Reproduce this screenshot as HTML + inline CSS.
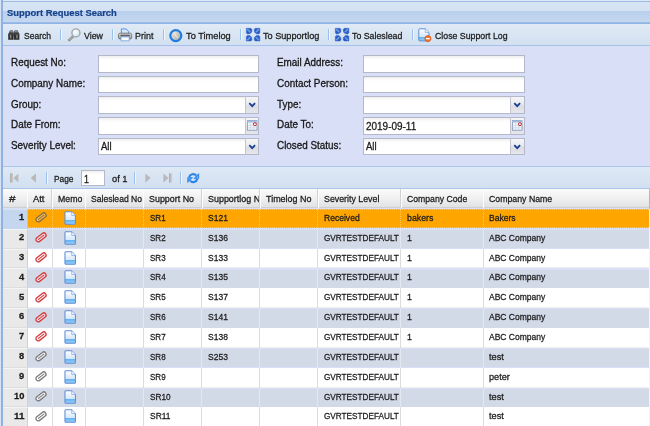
<!DOCTYPE html><html><head><meta charset="utf-8"><title>Support Request Search</title><style>
*{box-sizing:border-box;margin:0;padding:0}
html,body{width:650px;height:426px;overflow:hidden;background:#d9dff6}
body{position:relative;font-family:"Liberation Sans",sans-serif;color:#222}
.abs{position:absolute}
#root{left:0;top:0;width:650px;height:426px;will-change:transform}
.t{white-space:nowrap;line-height:12px;transform-origin:0 50%;color:#1c1c1c;-webkit-text-stroke:0.28px #1c1c1c}
.title{-webkit-text-stroke:0.2px #15428b}
svg{position:absolute;overflow:visible}
#hdr{left:0;top:0;width:650px;height:23.9px;background:linear-gradient(#dfe9f6 0,#dfe9f6 0.9px,#9bbbe7 1.1px,#9bbbe7 2.0px,#d7e4f4 2.3px,#d3e1f3 11.3px,#adc8eb 11.6px,#b9cfed 12.4px,#bcd1ed 13px,#c6d8f0 22.2px,#8fb3e3 22.6px,#8fb3e3 23.9px)}
.title{color:#15428b}
#tb{left:0;top:23.9px;width:650px;height:22.6px;background:linear-gradient(#e1eaf6 0,#d9e5f3 50%,#d2e0f1 21.2px,#a5c3e9 21.5px,#a5c3e9 100%)}
.sep{top:29px;width:2px;height:11.4px;background:linear-gradient(90deg,#9cc0ec 0,#9cc0ec 55%,#f3f7fc 55%)}
#lb{left:0;top:0;width:2.8px;height:426px;background:linear-gradient(90deg,#dce6f5 0,#d3e0f3 1.1px,#8db2e3 1.3px,#8db2e3 100%)}
#form{left:2.6px;top:46.6px;width:648px;height:119.6px;background:#d9dff6}
.lb{-webkit-text-stroke:0.3px #111}
.lbl{font-size:9.85px;color:#111;-webkit-text-stroke:0.25px #111;white-space:nowrap;line-height:12px;left:11px}
.lbl2{left:276.6px}
.inp{height:17.6px;background:linear-gradient(#eeeeee 0,#fdfdfd 3px,#fff 5px,#fff 100%);border:1px solid #b5b8c8;border-radius:0}
.trg{width:14.4px;height:17.6px;border:1px solid #b5b8c8;border-left:1px solid #c3c5cf;background:linear-gradient(#f6f6f7 0,#e9eaee 45%,#dcdde3 55%,#e6e7ec 100%)}
.val{font-size:10px;color:#111;-webkit-text-stroke:0.25px #111;white-space:nowrap;line-height:12px}
#pg{left:2.6px;top:166.0px;width:648px;height:23.4px;background:linear-gradient(#a9c5ea 0,#a9c5ea 1.1px,#dfe9f5 1.4px,#d8e4f3 50%,#d2e0f1 22.0px,#a9c5ea 22.3px,#a9c5ea 100%)}
#gh{left:2.6px;top:189.3px;width:646.6px;height:19.2px;background:linear-gradient(#fbfbfb 0,#f0f0f1 50%,#e1e2e4 100%);border-bottom:1px solid #cfcfcf}
.ghc{top:189.2px;height:19px;overflow:hidden}
.ghs{top:189.2px;width:1.6px;height:19px;background:linear-gradient(90deg,#d2d2d2 0,#d2d2d2 50%,#fdfdfd 50%)}
.row{left:2.6px;width:646.6px;background:#fff;border-bottom:1px solid #efefef}
.row.alt{background:#d2d9e7;border:none}
.row.sel{background:#ffa500;border-top:1px dotted rgba(255,240,210,.45);border-bottom:1px dotted rgba(255,240,210,.45)}
.num{left:2.6px;width:25.1px;background:#e9e9e9;border-right:1px solid #d2d2d2;border-top:1px solid #f4f4f4;border-bottom:1px solid #dedede}
.num.sel{background:#c5d7ef;border-right:1px solid #b4c6e0;border-top-color:#d5e2f4;border-bottom-color:#c5d7ef}
.vl{width:1px;background:#dcdcdc}
.vl.va{background:#e3e7f0}
.vl.vs{background:none;border-left:1px dotted rgba(255,240,205,.45)}
</style></head><body>
<div id="root" class="abs">
<div id="hdr" class="abs"></div>
<div class="abs t title" style="left:7px;top:6.6px;font-size:9.7px;font-weight:bold;transform:scaleX(0.9713);">Support Request Search</div>
<div id="tb" class="abs"></div>
<div class="abs t" style="left:24.4px;top:29.6px;font-size:9.5px;transform:scaleX(0.8978);">Search</div>
<div class="abs t" style="left:84px;top:29.6px;font-size:9.5px;transform:scaleX(0.9280);">View</div>
<div class="abs t" style="left:135px;top:29.6px;font-size:9.5px;transform:scaleX(0.9408);">Print</div>
<div class="abs t" style="left:186.4px;top:29.6px;font-size:9.5px;transform:scaleX(0.9740);">To Timelog</div>
<div class="abs t" style="left:263px;top:29.6px;font-size:9.5px;transform:scaleX(0.9607);">To Supportlog</div>
<div class="abs t" style="left:352px;top:29.6px;font-size:9.5px;transform:scaleX(0.9242);">To Saleslead</div>
<div class="abs t" style="left:434.6px;top:29.6px;font-size:9.5px;transform:scaleX(0.9226);">Close Support Log</div>
<div class="abs sep" style="left:60.2px"></div>
<div class="abs sep" style="left:111.8px"></div>
<div class="abs sep" style="left:162.5px"></div>
<div class="abs sep" style="left:239.7px"></div>
<div class="abs sep" style="left:328.0px"></div>
<div class="abs sep" style="left:411.6px"></div>
<svg width="0" height="0" style="position:absolute"><defs>
<linearGradient id="gpage" x1="0" y1="0" x2="0" y2="1"><stop offset="0" stop-color="#ffffff"/><stop offset="0.64" stop-color="#d6e8fb"/><stop offset="0.66" stop-color="#5cb0f2"/><stop offset="1" stop-color="#9fd0f8"/></linearGradient>
<linearGradient id="gclock" x1="0" y1="0" x2="1" y2="1"><stop offset="0" stop-color="#f4f2ee"/><stop offset="1" stop-color="#a9a59c"/></linearGradient>
<linearGradient id="gprn" x1="0" y1="0" x2="0" y2="1"><stop offset="0" stop-color="#e9e9e9"/><stop offset="1" stop-color="#8f8f8f"/></linearGradient>
<linearGradient id="gbar" x1="0" y1="0" x2="1" y2="0"><stop offset="0" stop-color="#a8a8a8"/><stop offset="1" stop-color="#cfcfcf"/></linearGradient>
<radialGradient id="glens" cx="0.4" cy="0.35" r="0.7"><stop offset="0" stop-color="#ffffff"/><stop offset="1" stop-color="#cfe3f7"/></radialGradient>
</defs></svg><svg style="left:7.8px;top:29.9px" width="11.6" height="10" viewBox="0 0 11.6 10"><g><path d="M2.0 0.4h3.0l0.6 2.4v7.0h-5.4v-5.6z" fill="#2e2e2e"/><path d="M2.1 0.5h2.8l0.4 1.9h-4.1z" fill="#7e8892"/><rect x="1.9" y="4.8" width="1.5" height="3.6" fill="#8a8a8a"/><rect x="0.4" y="3.6" width="5.0" height="0.9" fill="#555c63"/></g><g transform="translate(11.6,0) scale(-1,1)"><path d="M2.0 0.4h3.0l0.6 2.4v7.0h-5.4v-5.6z" fill="#2e2e2e"/><path d="M2.1 0.5h2.8l0.4 1.9h-4.1z" fill="#7e8892"/><rect x="1.9" y="4.8" width="1.5" height="3.6" fill="#8a8a8a"/><rect x="0.4" y="3.6" width="5.0" height="0.9" fill="#555c63"/></g><rect x="5.2" y="3.0" width="1.2" height="3.2" fill="#3a3a3a"/></svg><svg style="left:67.6px;top:27.6px" width="13" height="14" viewBox="0 0 13 14"><path d="M1.2 12.2L5.6 7.8" stroke="#8c8c8c" stroke-width="2.5" stroke-linecap="round"/><path d="M1.2 12.2L4.8 8.6" stroke="#bdbdbd" stroke-width="1.0" stroke-linecap="round"/><circle cx="7.9" cy="4.9" r="4.0" fill="url(#glens)" stroke="#a3a6aa" stroke-width="1.4"/></svg><svg style="left:118px;top:27.9px" width="14.2" height="13.4" viewBox="0 0 14.2 13.4"><path d="M3.4 5.6V0.9h4.6l2.6 2.4v2.3z" fill="#d3e6fb" stroke="#4f8ada" stroke-width="0.9" stroke-linejoin="round"/><rect x="0.5" y="5.2" width="13.2" height="5.8" rx="1.6" fill="url(#gprn)" stroke="#6f6f6f" stroke-width="0.9"/><rect x="2.4" y="6.7" width="9.4" height="1.5" fill="#5f5f5f"/><path d="M3.0 8.9h8.2v3.9h-8.2z" fill="#fbfdff" stroke="#6f9fdc" stroke-width="0.8"/></svg><svg style="left:169px;top:28.5px" width="13.6" height="13.2" viewBox="0 0 13.6 13.2"><circle cx="6.8" cy="6.6" r="5.5" fill="url(#gclock)" stroke="#1f7ce0" stroke-width="2.2"/><path d="M6.9 6.9L5.3 3.4M6.9 6.9L8.6 8.6" stroke="#f3f1ec" stroke-width="0.9" stroke-linecap="round" fill="none"/></svg><svg style="left:245.8px;top:28.1px" width="14.2" height="13.4" viewBox="0 0 14.2 13.4"><path d="M0.3 0.3H5.0L6.0 1.5L5.8 4.0L4.0 5.8L1.4 6.0L0.3 5.0z" fill="#2a5ec6" stroke="#2a5ec6" stroke-width="0.4" stroke-linejoin="round"/><path d="M1.7 1.6L3.9 3.8" stroke="#7da6e8" stroke-width="1.5" stroke-linecap="round" opacity="0.85"/><g transform="translate(14.2,0) scale(-1,1)"><path d="M0.3 0.3H5.0L6.0 1.5L5.8 4.0L4.0 5.8L1.4 6.0L0.3 5.0z" fill="#2a5ec6" stroke="#2a5ec6" stroke-width="0.4" stroke-linejoin="round"/><path d="M1.7 1.6L3.9 3.8" stroke="#7da6e8" stroke-width="1.5" stroke-linecap="round" opacity="0.85"/></g><g transform="translate(0,13.4) scale(1,-1)"><path d="M0.3 0.3H5.0L6.0 1.5L5.8 4.0L4.0 5.8L1.4 6.0L0.3 5.0z" fill="#2a5ec6" stroke="#2a5ec6" stroke-width="0.4" stroke-linejoin="round"/><path d="M1.7 1.6L3.9 3.8" stroke="#7da6e8" stroke-width="1.5" stroke-linecap="round" opacity="0.85"/></g><g transform="translate(14.2,13.4) scale(-1,-1)"><path d="M0.3 0.3H5.0L6.0 1.5L5.8 4.0L4.0 5.8L1.4 6.0L0.3 5.0z" fill="#2a5ec6" stroke="#2a5ec6" stroke-width="0.4" stroke-linejoin="round"/><path d="M1.7 1.6L3.9 3.8" stroke="#7da6e8" stroke-width="1.5" stroke-linecap="round" opacity="0.85"/></g></svg><svg style="left:334.6px;top:28.1px" width="14.2" height="13.4" viewBox="0 0 14.2 13.4"><path d="M0.3 0.3H5.0L6.0 1.5L5.8 4.0L4.0 5.8L1.4 6.0L0.3 5.0z" fill="#2a5ec6" stroke="#2a5ec6" stroke-width="0.4" stroke-linejoin="round"/><path d="M1.7 1.6L3.9 3.8" stroke="#7da6e8" stroke-width="1.5" stroke-linecap="round" opacity="0.85"/><g transform="translate(14.2,0) scale(-1,1)"><path d="M0.3 0.3H5.0L6.0 1.5L5.8 4.0L4.0 5.8L1.4 6.0L0.3 5.0z" fill="#2a5ec6" stroke="#2a5ec6" stroke-width="0.4" stroke-linejoin="round"/><path d="M1.7 1.6L3.9 3.8" stroke="#7da6e8" stroke-width="1.5" stroke-linecap="round" opacity="0.85"/></g><g transform="translate(0,13.4) scale(1,-1)"><path d="M0.3 0.3H5.0L6.0 1.5L5.8 4.0L4.0 5.8L1.4 6.0L0.3 5.0z" fill="#2a5ec6" stroke="#2a5ec6" stroke-width="0.4" stroke-linejoin="round"/><path d="M1.7 1.6L3.9 3.8" stroke="#7da6e8" stroke-width="1.5" stroke-linecap="round" opacity="0.85"/></g><g transform="translate(14.2,13.4) scale(-1,-1)"><path d="M0.3 0.3H5.0L6.0 1.5L5.8 4.0L4.0 5.8L1.4 6.0L0.3 5.0z" fill="#2a5ec6" stroke="#2a5ec6" stroke-width="0.4" stroke-linejoin="round"/><path d="M1.7 1.6L3.9 3.8" stroke="#7da6e8" stroke-width="1.5" stroke-linecap="round" opacity="0.85"/></g></svg><svg style="left:418.2px;top:28.0px" width="13.4" height="14" viewBox="0 0 13.4 14"><path d="M1.4 0.8h5.9l3.6 3.6v7.9a0.6 0.6 0 0 1-0.6 0.6h-8.9a0.6 0.6 0 0 1-0.6-0.6v-10.9a0.6 0.6 0 0 1 0.6-0.6z" fill="url(#gpage)" stroke="#5d8ed6" stroke-width="1" stroke-linejoin="round"/><path d="M7.3 0.8v3.6h3.6" fill="#eaf3fd" stroke="#7ea6e0" stroke-width="0.7" stroke-linejoin="round"/><circle cx="9.9" cy="10.6" r="3.1" fill="#f0732a" stroke="#d4541a" stroke-width="0.6"/><rect x="8.0" y="10.0" width="3.8" height="1.3" fill="#fff"/></svg>
<div id="form" class="abs"></div>
<div class="abs t lb" style="left:11px;top:57.2px;font-size:10.3px;transform:scaleX(0.9600);">Request No:</div>
<div class="abs t lb" style="left:276.6px;top:57.2px;font-size:10.3px;transform:scaleX(0.9600);">Email Address:</div>
<div class="abs inp" style="left:98px;top:55px;width:161.39999999999998px"></div>
<div class="abs inp" style="left:363.2px;top:55px;width:161.40000000000003px"></div>
<div class="abs t lb" style="left:11px;top:77.9px;font-size:10.3px;transform:scaleX(0.9600);">Company Name:</div>
<div class="abs t lb" style="left:276.6px;top:77.9px;font-size:10.3px;transform:scaleX(0.9600);">Contact Person:</div>
<div class="abs inp" style="left:98px;top:75.7px;width:161.39999999999998px"></div>
<div class="abs inp" style="left:363.2px;top:75.7px;width:161.40000000000003px"></div>
<div class="abs t lb" style="left:11px;top:98.60000000000001px;font-size:10.3px;transform:scaleX(0.9600);">Group:</div>
<div class="abs t lb" style="left:276.6px;top:98.60000000000001px;font-size:10.3px;transform:scaleX(0.9600);">Type:</div>
<div class="abs inp" style="left:98px;top:96.4px;width:147.79999999999998px"></div>
<div class="abs trg" style="left:244.99999999999997px;top:96.4px"></div>
<svg style="left:244.99999999999997px;top:96.4px" width="14.4" height="17.6" viewBox="0 0 14.4 17.6"><path d="M4.3 7.2L7.2 10.1L10.1 7.2" stroke="#1b3f94" stroke-width="1.9" fill="none" stroke-linejoin="miter"/></svg>
<div class="abs inp" style="left:363.2px;top:96.4px;width:147.80000000000004px"></div>
<div class="abs trg" style="left:510.20000000000005px;top:96.4px"></div>
<svg style="left:510.20000000000005px;top:96.4px" width="14.4" height="17.6" viewBox="0 0 14.4 17.6"><path d="M4.3 7.2L7.2 10.1L10.1 7.2" stroke="#1b3f94" stroke-width="1.9" fill="none" stroke-linejoin="miter"/></svg>
<div class="abs t lb" style="left:11px;top:119.3px;font-size:10.3px;transform:scaleX(0.9600);">Date From:</div>
<div class="abs t lb" style="left:276.6px;top:119.3px;font-size:10.3px;transform:scaleX(0.9600);">Date To:</div>
<div class="abs inp" style="left:98px;top:117.1px;width:147.79999999999998px"></div>
<div class="abs trg" style="left:244.99999999999997px;top:117.1px"></div>
<svg style="left:244.99999999999997px;top:117.1px" width="14.4" height="17.6" viewBox="0 0 14.4 17.6"><rect x="2.4" y="3.6" width="9.6" height="9.6" fill="#f4f6fa" stroke="#7d93b8" stroke-width="0.8"/><rect x="2.4" y="3.6" width="9.6" height="2.0" fill="#a9bfe2"/><path d="M2.4 8.4h9.6M2.4 10.8h9.6M5.6 5.8v7.4M8.8 5.8v7.4" stroke="#c3cee0" stroke-width="0.6"/><circle cx="9.9" cy="7.2" r="1.5" fill="#fff" stroke="#c0282d" stroke-width="1.0"/></svg>
<div class="abs inp" style="left:363.2px;top:117.1px;width:147.80000000000004px"></div>
<div class="abs trg" style="left:510.20000000000005px;top:117.1px"></div>
<svg style="left:510.20000000000005px;top:117.1px" width="14.4" height="17.6" viewBox="0 0 14.4 17.6"><rect x="2.4" y="3.6" width="9.6" height="9.6" fill="#f4f6fa" stroke="#7d93b8" stroke-width="0.8"/><rect x="2.4" y="3.6" width="9.6" height="2.0" fill="#a9bfe2"/><path d="M2.4 8.4h9.6M2.4 10.8h9.6M5.6 5.8v7.4M8.8 5.8v7.4" stroke="#c3cee0" stroke-width="0.6"/><circle cx="9.9" cy="7.2" r="1.5" fill="#fff" stroke="#c0282d" stroke-width="1.0"/></svg>
<div class="abs t lb" style="left:11px;top:140.0px;font-size:10.3px;transform:scaleX(0.9600);">Severity Level:</div>
<div class="abs t lb" style="left:276.6px;top:140.0px;font-size:10.3px;transform:scaleX(0.9600);">Closed Status:</div>
<div class="abs inp" style="left:98px;top:137.8px;width:147.79999999999998px"></div>
<div class="abs trg" style="left:244.99999999999997px;top:137.8px"></div>
<svg style="left:244.99999999999997px;top:137.8px" width="14.4" height="17.6" viewBox="0 0 14.4 17.6"><path d="M4.3 7.2L7.2 10.1L10.1 7.2" stroke="#1b3f94" stroke-width="1.9" fill="none" stroke-linejoin="miter"/></svg>
<div class="abs inp" style="left:363.2px;top:137.8px;width:147.80000000000004px"></div>
<div class="abs trg" style="left:510.20000000000005px;top:137.8px"></div>
<svg style="left:510.20000000000005px;top:137.8px" width="14.4" height="17.6" viewBox="0 0 14.4 17.6"><path d="M4.3 7.2L7.2 10.1L10.1 7.2" stroke="#1b3f94" stroke-width="1.9" fill="none" stroke-linejoin="miter"/></svg>
<div class="abs t" style="left:101px;top:140.8px;font-size:10.2px;transform:scaleX(0.9357);">All</div>
<div class="abs t" style="left:366.4px;top:140.8px;font-size:10.2px;transform:scaleX(0.9357);">All</div>
<div class="abs t" style="left:366.4px;top:120.5px;font-size:10px;transform:scaleX(0.9956);">2019-09-11</div>
<div id="pg" class="abs"></div>
<div class="abs t" style="left:53.6px;top:173.2px;font-size:9.5px;transform:scaleX(0.8790);">Page</div>
<div class="abs t" style="left:112px;top:173.2px;font-size:9.5px;transform:scaleX(0.9815);">of 1</div>
<div class="abs inp" style="left:80.6px;top:170px;width:24.6px;height:16.4px"></div>
<div class="abs t" style="left:84px;top:174.3px;font-size:10px;transform:scaleX(0.8883);">1</div>
<div class="abs sep" style="left:46.2px;top:172.2px"></div>
<div class="abs sep" style="left:134px;top:172.2px"></div>
<div class="abs sep" style="left:180px;top:172.2px"></div>
<svg style="left:9.8px;top:173px" width="9" height="10" viewBox="0 0 9 10"><rect x="0.1" y="0.2" width="2.9" height="9.4" fill="url(#gbar)"/><path d="M8.4 0.4v9.0L3.4 4.9z" fill="#b9b9b9"/></svg><svg style="left:30.2px;top:173px" width="7" height="10" viewBox="0 0 7 10"><path d="M6.0 0.4v9.0L0.6 4.9z" fill="#b9b9b9"/></svg><svg style="left:144.8px;top:173px" width="7" height="10" viewBox="0 0 7 10"><path d="M0.4 0.4v9.0L5.6 4.9z" fill="#b9b9b9"/></svg><svg style="left:163px;top:173px" width="9" height="10" viewBox="0 0 9 10"><rect x="6.0" y="0.2" width="2.9" height="9.4" fill="url(#gbar)"/><path d="M0.4 0.4v9.0L5.4 4.9z" fill="#b9b9b9"/></svg><svg style="left:186.8px;top:172.0px" width="12.4" height="12.2" viewBox="0 0 12.4 12.2"><path d="M2.1 5.3A4.3 4.3 0 0 1 9.3 3.4" fill="none" stroke="#2a86e8" stroke-width="2.1"/><path d="M11.8 1.6V6.6H6.8z" fill="#2a86e8" stroke="#2a86e8" stroke-width="0.6" stroke-linejoin="round"/><path d="M10.9 4.2V5.8H9.2z" fill="#9fd6fb"/><path d="M10.3 6.9A4.3 4.3 0 0 1 3.1 8.8" fill="none" stroke="#2a86e8" stroke-width="2.1"/><path d="M0.6 10.6V5.6H5.6z" fill="#2a86e8" stroke="#2a86e8" stroke-width="0.6" stroke-linejoin="round"/><path d="M1.5 8.0V6.4H3.2z" fill="#9fd6fb"/></svg>
<div id="gh" class="abs"></div>
<div class="abs ghc" style="left:2.5px;width:24.1px">
<div class="abs t" style="left:6.2px;top:4.2px;font-size:9.4px;transform:scaleX(1.2624);">#</div>
</div>
<div class="abs ghs" style="left:26.6px"></div>
<div class="abs ghc" style="left:27.6px;width:23.799999999999997px">
<div class="abs t" style="left:5.6px;top:4.2px;font-size:9.4px;transform:scaleX(1.0006);">Att</div>
</div>
<div class="abs ghs" style="left:51.4px"></div>
<div class="abs ghc" style="left:52.4px;width:32.300000000000004px">
<div class="abs t" style="left:5.6px;top:4.2px;font-size:9.4px;transform:scaleX(0.9312);">Memo</div>
</div>
<div class="abs ghs" style="left:84.7px"></div>
<div class="abs ghc" style="left:85.7px;width:57.2px">
<div class="abs t" style="left:5.6px;top:4.2px;font-size:9.4px;transform:scaleX(0.9151);">Saleslead No</div>
</div>
<div class="abs ghs" style="left:142.9px"></div>
<div class="abs ghc" style="left:143.9px;width:57.099999999999994px">
<div class="abs t" style="left:5.6px;top:4.2px;font-size:9.4px;transform:scaleX(0.9503);">Support No</div>
</div>
<div class="abs ghs" style="left:201.0px"></div>
<div class="abs ghc" style="left:202.0px;width:57.10000000000002px">
<div class="abs t" style="left:5.6px;top:4.2px;font-size:9.4px;transform:scaleX(0.9529);">Supportlog N</div>
</div>
<div class="abs ghs" style="left:259.1px"></div>
<div class="abs ghc" style="left:260.1px;width:57.0px">
<div class="abs t" style="left:5.6px;top:4.2px;font-size:9.4px;transform:scaleX(0.9559);">Timelog No</div>
</div>
<div class="abs ghs" style="left:317.1px"></div>
<div class="abs ghc" style="left:318.1px;width:82.0px">
<div class="abs t" style="left:5.6px;top:4.2px;font-size:9.4px;transform:scaleX(0.9402);">Severity Level</div>
</div>
<div class="abs ghs" style="left:400.1px"></div>
<div class="abs ghc" style="left:401.1px;width:81.59999999999997px">
<div class="abs t" style="left:5.6px;top:4.2px;font-size:9.4px;transform:scaleX(0.9244);">Company Code</div>
</div>
<div class="abs ghs" style="left:482.7px"></div>
<div class="abs ghc" style="left:483.7px;width:165.3px">
<div class="abs t" style="left:5.6px;top:4.2px;font-size:9.4px;transform:scaleX(0.9336);">Company Name</div>
</div>
<div class="abs row sel" style="top:209.20px;height:19.0px"></div>
<div class="abs num sel" style="top:208.9px;height:19.85px"></div>
<div class="abs t" style="left:19.1px;top:211.1px;font-size:9.4px;font-weight:bold;transform:scaleX(0.9964);">1</div>
<div class="abs t" style="left:149.5px;top:211.5px;font-size:9.6px;transform:scaleX(0.8356);">SR1</div>
<div class="abs t" style="left:207.6px;top:211.5px;font-size:9.6px;transform:scaleX(0.8866);">S121</div>
<div class="abs t" style="left:323.70000000000005px;top:211.5px;font-size:9.6px;transform:scaleX(0.8914);">Received</div>
<div class="abs t" style="left:406.70000000000005px;top:211.5px;font-size:9.6px;transform:scaleX(0.9139);">bakers</div>
<div class="abs t" style="left:489.3px;top:211.5px;font-size:9.6px;transform:scaleX(0.8923);">Bakers</div>
<div class="abs vl vs" style="left:51.699999999999996px;top:208.9px;height:19.85px"></div>
<div class="abs vl vs" style="left:85.0px;top:208.9px;height:19.85px"></div>
<div class="abs vl vs" style="left:143.20000000000002px;top:208.9px;height:19.85px"></div>
<div class="abs vl vs" style="left:201.3px;top:208.9px;height:19.85px"></div>
<div class="abs vl vs" style="left:259.40000000000003px;top:208.9px;height:19.85px"></div>
<div class="abs vl vs" style="left:317.40000000000003px;top:208.9px;height:19.85px"></div>
<div class="abs vl vs" style="left:400.40000000000003px;top:208.9px;height:19.85px"></div>
<div class="abs vl vs" style="left:483.0px;top:208.9px;height:19.85px"></div>
<svg style="left:35.1px;top:212.3px" width="12" height="10.8" viewBox="0 0 12 10.8"><g transform="rotate(-38 6.0 5.4)"><rect x="0.2" y="3.1" width="11.6" height="4.6" rx="2.3" fill="rgba(255,220,150,.45)" stroke="#85704a" stroke-width="1.3"/><path d="M9.6 5.4H2.8" fill="none" stroke="#85704a" stroke-width="1.1" stroke-linecap="round"/></g></svg>
<svg style="left:63.5px;top:210.9px" width="12.4" height="14" viewBox="0 0 12 13.9"><path d="M1.5 0.8h6.0l3.7 3.7v7.9a0.7 0.7 0 0 1-0.7 0.7h-9.0a0.7 0.7 0 0 1-0.7-0.7v-10.9a0.7 0.7 0 0 1 0.7-0.7z" fill="url(#gpage)" stroke="#608dd6" stroke-width="1.05" stroke-linejoin="round"/><path d="M7.5 0.8v3.7h3.7" fill="#eef5fd" stroke="#7ea6e0" stroke-width="0.7" stroke-linejoin="round"/></svg>
<div class="abs row alt" style="top:229.90px;height:18.25px"></div>
<div class="abs num" style="top:228.75px;height:19.85px"></div>
<div class="abs t" style="left:19.1px;top:230.95px;font-size:9.4px;font-weight:bold;transform:scaleX(0.9964);">2</div>
<div class="abs t" style="left:149.5px;top:231.75px;font-size:9.6px;transform:scaleX(0.8356);">SR2</div>
<div class="abs t" style="left:207.6px;top:231.75px;font-size:9.6px;transform:scaleX(0.8866);">S136</div>
<div class="abs t" style="left:323.70000000000005px;top:231.75px;font-size:9.6px;transform:scaleX(0.8542);">GVRTESTDEFAULT</div>
<div class="abs t" style="left:406.70000000000005px;top:231.75px;font-size:9.6px;transform:scaleX(0.9247);">1</div>
<div class="abs t" style="left:489.3px;top:231.75px;font-size:9.6px;transform:scaleX(0.8873);">ABC Company</div>
<div class="abs vl va" style="left:51.699999999999996px;top:228.75px;height:19.85px"></div>
<div class="abs vl va" style="left:85.0px;top:228.75px;height:19.85px"></div>
<div class="abs vl va" style="left:143.20000000000002px;top:228.75px;height:19.85px"></div>
<div class="abs vl va" style="left:201.3px;top:228.75px;height:19.85px"></div>
<div class="abs vl va" style="left:259.40000000000003px;top:228.75px;height:19.85px"></div>
<div class="abs vl va" style="left:317.40000000000003px;top:228.75px;height:19.85px"></div>
<div class="abs vl va" style="left:400.40000000000003px;top:228.75px;height:19.85px"></div>
<div class="abs vl va" style="left:483.0px;top:228.75px;height:19.85px"></div>
<svg style="left:35.1px;top:232.15px" width="12" height="10.8" viewBox="0 0 12 10.8"><g transform="rotate(-38 6.0 5.4)"><rect x="0.2" y="3.1" width="11.6" height="4.6" rx="2.3" fill="rgba(255,240,240,.6)" stroke="#d63a3d" stroke-width="1.3"/><path d="M9.6 5.4H2.8" fill="none" stroke="#d63a3d" stroke-width="1.1" stroke-linecap="round"/></g></svg>
<svg style="left:63.5px;top:230.75px" width="12.4" height="14" viewBox="0 0 12 13.9"><path d="M1.5 0.8h6.0l3.7 3.7v7.9a0.7 0.7 0 0 1-0.7 0.7h-9.0a0.7 0.7 0 0 1-0.7-0.7v-10.9a0.7 0.7 0 0 1 0.7-0.7z" fill="url(#gpage)" stroke="#608dd6" stroke-width="1.05" stroke-linejoin="round"/><path d="M7.5 0.8v3.7h3.7" fill="#eef5fd" stroke="#7ea6e0" stroke-width="0.7" stroke-linejoin="round"/></svg>
<div class="abs row" style="top:248.60px;height:19.85px"></div>
<div class="abs num" style="top:248.6px;height:19.85px"></div>
<div class="abs t" style="left:19.1px;top:250.79999999999998px;font-size:9.4px;font-weight:bold;transform:scaleX(0.9964);">3</div>
<div class="abs t" style="left:149.5px;top:251.6px;font-size:9.6px;transform:scaleX(0.8356);">SR3</div>
<div class="abs t" style="left:207.6px;top:251.6px;font-size:9.6px;transform:scaleX(0.8866);">S133</div>
<div class="abs t" style="left:323.70000000000005px;top:251.6px;font-size:9.6px;transform:scaleX(0.8542);">GVRTESTDEFAULT</div>
<div class="abs t" style="left:406.70000000000005px;top:251.6px;font-size:9.6px;transform:scaleX(0.9247);">1</div>
<div class="abs t" style="left:489.3px;top:251.6px;font-size:9.6px;transform:scaleX(0.8873);">ABC Company</div>
<div class="abs vl " style="left:51.699999999999996px;top:248.6px;height:19.85px"></div>
<div class="abs vl " style="left:85.0px;top:248.6px;height:19.85px"></div>
<div class="abs vl " style="left:143.20000000000002px;top:248.6px;height:19.85px"></div>
<div class="abs vl " style="left:201.3px;top:248.6px;height:19.85px"></div>
<div class="abs vl " style="left:259.40000000000003px;top:248.6px;height:19.85px"></div>
<div class="abs vl " style="left:317.40000000000003px;top:248.6px;height:19.85px"></div>
<div class="abs vl " style="left:400.40000000000003px;top:248.6px;height:19.85px"></div>
<div class="abs vl " style="left:483.0px;top:248.6px;height:19.85px"></div>
<svg style="left:35.1px;top:252.0px" width="12" height="10.8" viewBox="0 0 12 10.8"><g transform="rotate(-38 6.0 5.4)"><rect x="0.2" y="3.1" width="11.6" height="4.6" rx="2.3" fill="rgba(255,240,240,.6)" stroke="#d63a3d" stroke-width="1.3"/><path d="M9.6 5.4H2.8" fill="none" stroke="#d63a3d" stroke-width="1.1" stroke-linecap="round"/></g></svg>
<svg style="left:63.5px;top:250.6px" width="12.4" height="14" viewBox="0 0 12 13.9"><path d="M1.5 0.8h6.0l3.7 3.7v7.9a0.7 0.7 0 0 1-0.7 0.7h-9.0a0.7 0.7 0 0 1-0.7-0.7v-10.9a0.7 0.7 0 0 1 0.7-0.7z" fill="url(#gpage)" stroke="#608dd6" stroke-width="1.05" stroke-linejoin="round"/><path d="M7.5 0.8v3.7h3.7" fill="#eef5fd" stroke="#7ea6e0" stroke-width="0.7" stroke-linejoin="round"/></svg>
<div class="abs row alt" style="top:269.60px;height:18.25px"></div>
<div class="abs num" style="top:268.45px;height:19.85px"></div>
<div class="abs t" style="left:19.1px;top:270.65px;font-size:9.4px;font-weight:bold;transform:scaleX(0.9964);">4</div>
<div class="abs t" style="left:149.5px;top:271.45px;font-size:9.6px;transform:scaleX(0.8356);">SR4</div>
<div class="abs t" style="left:207.6px;top:271.45px;font-size:9.6px;transform:scaleX(0.8866);">S135</div>
<div class="abs t" style="left:323.70000000000005px;top:271.45px;font-size:9.6px;transform:scaleX(0.8542);">GVRTESTDEFAULT</div>
<div class="abs t" style="left:406.70000000000005px;top:271.45px;font-size:9.6px;transform:scaleX(0.9247);">1</div>
<div class="abs t" style="left:489.3px;top:271.45px;font-size:9.6px;transform:scaleX(0.8873);">ABC Company</div>
<div class="abs vl va" style="left:51.699999999999996px;top:268.45px;height:19.85px"></div>
<div class="abs vl va" style="left:85.0px;top:268.45px;height:19.85px"></div>
<div class="abs vl va" style="left:143.20000000000002px;top:268.45px;height:19.85px"></div>
<div class="abs vl va" style="left:201.3px;top:268.45px;height:19.85px"></div>
<div class="abs vl va" style="left:259.40000000000003px;top:268.45px;height:19.85px"></div>
<div class="abs vl va" style="left:317.40000000000003px;top:268.45px;height:19.85px"></div>
<div class="abs vl va" style="left:400.40000000000003px;top:268.45px;height:19.85px"></div>
<div class="abs vl va" style="left:483.0px;top:268.45px;height:19.85px"></div>
<svg style="left:35.1px;top:271.84999999999997px" width="12" height="10.8" viewBox="0 0 12 10.8"><g transform="rotate(-38 6.0 5.4)"><rect x="0.2" y="3.1" width="11.6" height="4.6" rx="2.3" fill="rgba(255,240,240,.6)" stroke="#d63a3d" stroke-width="1.3"/><path d="M9.6 5.4H2.8" fill="none" stroke="#d63a3d" stroke-width="1.1" stroke-linecap="round"/></g></svg>
<svg style="left:63.5px;top:270.45px" width="12.4" height="14" viewBox="0 0 12 13.9"><path d="M1.5 0.8h6.0l3.7 3.7v7.9a0.7 0.7 0 0 1-0.7 0.7h-9.0a0.7 0.7 0 0 1-0.7-0.7v-10.9a0.7 0.7 0 0 1 0.7-0.7z" fill="url(#gpage)" stroke="#608dd6" stroke-width="1.05" stroke-linejoin="round"/><path d="M7.5 0.8v3.7h3.7" fill="#eef5fd" stroke="#7ea6e0" stroke-width="0.7" stroke-linejoin="round"/></svg>
<div class="abs row" style="top:288.30px;height:19.85px"></div>
<div class="abs num" style="top:288.3px;height:19.85px"></div>
<div class="abs t" style="left:19.1px;top:290.5px;font-size:9.4px;font-weight:bold;transform:scaleX(0.9964);">5</div>
<div class="abs t" style="left:149.5px;top:291.3px;font-size:9.6px;transform:scaleX(0.8356);">SR5</div>
<div class="abs t" style="left:207.6px;top:291.3px;font-size:9.6px;transform:scaleX(0.8866);">S137</div>
<div class="abs t" style="left:323.70000000000005px;top:291.3px;font-size:9.6px;transform:scaleX(0.8542);">GVRTESTDEFAULT</div>
<div class="abs t" style="left:406.70000000000005px;top:291.3px;font-size:9.6px;transform:scaleX(0.9247);">1</div>
<div class="abs t" style="left:489.3px;top:291.3px;font-size:9.6px;transform:scaleX(0.8873);">ABC Company</div>
<div class="abs vl " style="left:51.699999999999996px;top:288.3px;height:19.85px"></div>
<div class="abs vl " style="left:85.0px;top:288.3px;height:19.85px"></div>
<div class="abs vl " style="left:143.20000000000002px;top:288.3px;height:19.85px"></div>
<div class="abs vl " style="left:201.3px;top:288.3px;height:19.85px"></div>
<div class="abs vl " style="left:259.40000000000003px;top:288.3px;height:19.85px"></div>
<div class="abs vl " style="left:317.40000000000003px;top:288.3px;height:19.85px"></div>
<div class="abs vl " style="left:400.40000000000003px;top:288.3px;height:19.85px"></div>
<div class="abs vl " style="left:483.0px;top:288.3px;height:19.85px"></div>
<svg style="left:35.1px;top:291.7px" width="12" height="10.8" viewBox="0 0 12 10.8"><g transform="rotate(-38 6.0 5.4)"><rect x="0.2" y="3.1" width="11.6" height="4.6" rx="2.3" fill="rgba(255,240,240,.6)" stroke="#d63a3d" stroke-width="1.3"/><path d="M9.6 5.4H2.8" fill="none" stroke="#d63a3d" stroke-width="1.1" stroke-linecap="round"/></g></svg>
<svg style="left:63.5px;top:290.3px" width="12.4" height="14" viewBox="0 0 12 13.9"><path d="M1.5 0.8h6.0l3.7 3.7v7.9a0.7 0.7 0 0 1-0.7 0.7h-9.0a0.7 0.7 0 0 1-0.7-0.7v-10.9a0.7 0.7 0 0 1 0.7-0.7z" fill="url(#gpage)" stroke="#608dd6" stroke-width="1.05" stroke-linejoin="round"/><path d="M7.5 0.8v3.7h3.7" fill="#eef5fd" stroke="#7ea6e0" stroke-width="0.7" stroke-linejoin="round"/></svg>
<div class="abs row alt" style="top:309.30px;height:18.25px"></div>
<div class="abs num" style="top:308.15px;height:19.85px"></div>
<div class="abs t" style="left:19.1px;top:310.34999999999997px;font-size:9.4px;font-weight:bold;transform:scaleX(0.9964);">6</div>
<div class="abs t" style="left:149.5px;top:311.15px;font-size:9.6px;transform:scaleX(0.8356);">SR6</div>
<div class="abs t" style="left:207.6px;top:311.15px;font-size:9.6px;transform:scaleX(0.8866);">S141</div>
<div class="abs t" style="left:323.70000000000005px;top:311.15px;font-size:9.6px;transform:scaleX(0.8542);">GVRTESTDEFAULT</div>
<div class="abs t" style="left:406.70000000000005px;top:311.15px;font-size:9.6px;transform:scaleX(0.9247);">1</div>
<div class="abs t" style="left:489.3px;top:311.15px;font-size:9.6px;transform:scaleX(0.8873);">ABC Company</div>
<div class="abs vl va" style="left:51.699999999999996px;top:308.15px;height:19.85px"></div>
<div class="abs vl va" style="left:85.0px;top:308.15px;height:19.85px"></div>
<div class="abs vl va" style="left:143.20000000000002px;top:308.15px;height:19.85px"></div>
<div class="abs vl va" style="left:201.3px;top:308.15px;height:19.85px"></div>
<div class="abs vl va" style="left:259.40000000000003px;top:308.15px;height:19.85px"></div>
<div class="abs vl va" style="left:317.40000000000003px;top:308.15px;height:19.85px"></div>
<div class="abs vl va" style="left:400.40000000000003px;top:308.15px;height:19.85px"></div>
<div class="abs vl va" style="left:483.0px;top:308.15px;height:19.85px"></div>
<svg style="left:35.1px;top:311.54999999999995px" width="12" height="10.8" viewBox="0 0 12 10.8"><g transform="rotate(-38 6.0 5.4)"><rect x="0.2" y="3.1" width="11.6" height="4.6" rx="2.3" fill="rgba(255,240,240,.6)" stroke="#d63a3d" stroke-width="1.3"/><path d="M9.6 5.4H2.8" fill="none" stroke="#d63a3d" stroke-width="1.1" stroke-linecap="round"/></g></svg>
<svg style="left:63.5px;top:310.15px" width="12.4" height="14" viewBox="0 0 12 13.9"><path d="M1.5 0.8h6.0l3.7 3.7v7.9a0.7 0.7 0 0 1-0.7 0.7h-9.0a0.7 0.7 0 0 1-0.7-0.7v-10.9a0.7 0.7 0 0 1 0.7-0.7z" fill="url(#gpage)" stroke="#608dd6" stroke-width="1.05" stroke-linejoin="round"/><path d="M7.5 0.8v3.7h3.7" fill="#eef5fd" stroke="#7ea6e0" stroke-width="0.7" stroke-linejoin="round"/></svg>
<div class="abs row" style="top:328.00px;height:19.85px"></div>
<div class="abs num" style="top:328.0px;height:19.85px"></div>
<div class="abs t" style="left:19.1px;top:330.2px;font-size:9.4px;font-weight:bold;transform:scaleX(0.9964);">7</div>
<div class="abs t" style="left:149.5px;top:331.0px;font-size:9.6px;transform:scaleX(0.8356);">SR7</div>
<div class="abs t" style="left:207.6px;top:331.0px;font-size:9.6px;transform:scaleX(0.8866);">S138</div>
<div class="abs t" style="left:323.70000000000005px;top:331.0px;font-size:9.6px;transform:scaleX(0.8542);">GVRTESTDEFAULT</div>
<div class="abs t" style="left:406.70000000000005px;top:331.0px;font-size:9.6px;transform:scaleX(0.9247);">1</div>
<div class="abs t" style="left:489.3px;top:331.0px;font-size:9.6px;transform:scaleX(0.8873);">ABC Company</div>
<div class="abs vl " style="left:51.699999999999996px;top:328.0px;height:19.85px"></div>
<div class="abs vl " style="left:85.0px;top:328.0px;height:19.85px"></div>
<div class="abs vl " style="left:143.20000000000002px;top:328.0px;height:19.85px"></div>
<div class="abs vl " style="left:201.3px;top:328.0px;height:19.85px"></div>
<div class="abs vl " style="left:259.40000000000003px;top:328.0px;height:19.85px"></div>
<div class="abs vl " style="left:317.40000000000003px;top:328.0px;height:19.85px"></div>
<div class="abs vl " style="left:400.40000000000003px;top:328.0px;height:19.85px"></div>
<div class="abs vl " style="left:483.0px;top:328.0px;height:19.85px"></div>
<svg style="left:35.1px;top:331.4px" width="12" height="10.8" viewBox="0 0 12 10.8"><g transform="rotate(-38 6.0 5.4)"><rect x="0.2" y="3.1" width="11.6" height="4.6" rx="2.3" fill="rgba(255,240,240,.6)" stroke="#d63a3d" stroke-width="1.3"/><path d="M9.6 5.4H2.8" fill="none" stroke="#d63a3d" stroke-width="1.1" stroke-linecap="round"/></g></svg>
<svg style="left:63.5px;top:330.0px" width="12.4" height="14" viewBox="0 0 12 13.9"><path d="M1.5 0.8h6.0l3.7 3.7v7.9a0.7 0.7 0 0 1-0.7 0.7h-9.0a0.7 0.7 0 0 1-0.7-0.7v-10.9a0.7 0.7 0 0 1 0.7-0.7z" fill="url(#gpage)" stroke="#608dd6" stroke-width="1.05" stroke-linejoin="round"/><path d="M7.5 0.8v3.7h3.7" fill="#eef5fd" stroke="#7ea6e0" stroke-width="0.7" stroke-linejoin="round"/></svg>
<div class="abs row alt" style="top:349.00px;height:18.25px"></div>
<div class="abs num" style="top:347.85px;height:19.85px"></div>
<div class="abs t" style="left:19.1px;top:350.05px;font-size:9.4px;font-weight:bold;transform:scaleX(0.9964);">8</div>
<div class="abs t" style="left:149.5px;top:350.85px;font-size:9.6px;transform:scaleX(0.8356);">SR8</div>
<div class="abs t" style="left:207.6px;top:350.85px;font-size:9.6px;transform:scaleX(0.8866);">S253</div>
<div class="abs t" style="left:323.70000000000005px;top:350.85px;font-size:9.6px;transform:scaleX(0.8542);">GVRTESTDEFAULT</div>
<div class="abs t" style="left:489.3px;top:350.85px;font-size:9.6px;transform:scaleX(0.9595);">test</div>
<div class="abs vl va" style="left:51.699999999999996px;top:347.85px;height:19.85px"></div>
<div class="abs vl va" style="left:85.0px;top:347.85px;height:19.85px"></div>
<div class="abs vl va" style="left:143.20000000000002px;top:347.85px;height:19.85px"></div>
<div class="abs vl va" style="left:201.3px;top:347.85px;height:19.85px"></div>
<div class="abs vl va" style="left:259.40000000000003px;top:347.85px;height:19.85px"></div>
<div class="abs vl va" style="left:317.40000000000003px;top:347.85px;height:19.85px"></div>
<div class="abs vl va" style="left:400.40000000000003px;top:347.85px;height:19.85px"></div>
<div class="abs vl va" style="left:483.0px;top:347.85px;height:19.85px"></div>
<svg style="left:35.1px;top:351.25px" width="12" height="10.8" viewBox="0 0 12 10.8"><g transform="rotate(-38 6.0 5.4)"><rect x="0.2" y="3.1" width="11.6" height="4.6" rx="2.3" fill="rgba(255,255,255,.7)" stroke="#7c7c7c" stroke-width="1.3"/><path d="M9.6 5.4H2.8" fill="none" stroke="#7c7c7c" stroke-width="1.1" stroke-linecap="round"/></g></svg>
<svg style="left:63.5px;top:349.85px" width="12.4" height="14" viewBox="0 0 12 13.9"><path d="M1.5 0.8h6.0l3.7 3.7v7.9a0.7 0.7 0 0 1-0.7 0.7h-9.0a0.7 0.7 0 0 1-0.7-0.7v-10.9a0.7 0.7 0 0 1 0.7-0.7z" fill="url(#gpage)" stroke="#608dd6" stroke-width="1.05" stroke-linejoin="round"/><path d="M7.5 0.8v3.7h3.7" fill="#eef5fd" stroke="#7ea6e0" stroke-width="0.7" stroke-linejoin="round"/></svg>
<div class="abs row" style="top:367.70px;height:19.85px"></div>
<div class="abs num" style="top:367.7px;height:19.85px"></div>
<div class="abs t" style="left:19.1px;top:369.9px;font-size:9.4px;font-weight:bold;transform:scaleX(0.9964);">9</div>
<div class="abs t" style="left:149.5px;top:370.7px;font-size:9.6px;transform:scaleX(0.8356);">SR9</div>
<div class="abs t" style="left:323.70000000000005px;top:370.7px;font-size:9.6px;transform:scaleX(0.8542);">GVRTESTDEFAULT</div>
<div class="abs t" style="left:489.3px;top:370.7px;font-size:9.6px;transform:scaleX(0.9511);">peter</div>
<div class="abs vl " style="left:51.699999999999996px;top:367.7px;height:19.85px"></div>
<div class="abs vl " style="left:85.0px;top:367.7px;height:19.85px"></div>
<div class="abs vl " style="left:143.20000000000002px;top:367.7px;height:19.85px"></div>
<div class="abs vl " style="left:201.3px;top:367.7px;height:19.85px"></div>
<div class="abs vl " style="left:259.40000000000003px;top:367.7px;height:19.85px"></div>
<div class="abs vl " style="left:317.40000000000003px;top:367.7px;height:19.85px"></div>
<div class="abs vl " style="left:400.40000000000003px;top:367.7px;height:19.85px"></div>
<div class="abs vl " style="left:483.0px;top:367.7px;height:19.85px"></div>
<svg style="left:35.1px;top:371.09999999999997px" width="12" height="10.8" viewBox="0 0 12 10.8"><g transform="rotate(-38 6.0 5.4)"><rect x="0.2" y="3.1" width="11.6" height="4.6" rx="2.3" fill="rgba(255,255,255,.7)" stroke="#7c7c7c" stroke-width="1.3"/><path d="M9.6 5.4H2.8" fill="none" stroke="#7c7c7c" stroke-width="1.1" stroke-linecap="round"/></g></svg>
<svg style="left:63.5px;top:369.7px" width="12.4" height="14" viewBox="0 0 12 13.9"><path d="M1.5 0.8h6.0l3.7 3.7v7.9a0.7 0.7 0 0 1-0.7 0.7h-9.0a0.7 0.7 0 0 1-0.7-0.7v-10.9a0.7 0.7 0 0 1 0.7-0.7z" fill="url(#gpage)" stroke="#608dd6" stroke-width="1.05" stroke-linejoin="round"/><path d="M7.5 0.8v3.7h3.7" fill="#eef5fd" stroke="#7ea6e0" stroke-width="0.7" stroke-linejoin="round"/></svg>
<div class="abs row alt" style="top:388.70px;height:18.25px"></div>
<div class="abs num" style="top:387.55px;height:19.85px"></div>
<div class="abs t" style="left:13.9px;top:389.75px;font-size:9.4px;font-weight:bold;transform:scaleX(0.9964);">10</div>
<div class="abs t" style="left:149.5px;top:390.55px;font-size:9.6px;transform:scaleX(0.8560);">SR10</div>
<div class="abs t" style="left:323.70000000000005px;top:390.55px;font-size:9.6px;transform:scaleX(0.8542);">GVRTESTDEFAULT</div>
<div class="abs t" style="left:489.3px;top:390.55px;font-size:9.6px;transform:scaleX(0.9595);">test</div>
<div class="abs vl va" style="left:51.699999999999996px;top:387.55px;height:19.85px"></div>
<div class="abs vl va" style="left:85.0px;top:387.55px;height:19.85px"></div>
<div class="abs vl va" style="left:143.20000000000002px;top:387.55px;height:19.85px"></div>
<div class="abs vl va" style="left:201.3px;top:387.55px;height:19.85px"></div>
<div class="abs vl va" style="left:259.40000000000003px;top:387.55px;height:19.85px"></div>
<div class="abs vl va" style="left:317.40000000000003px;top:387.55px;height:19.85px"></div>
<div class="abs vl va" style="left:400.40000000000003px;top:387.55px;height:19.85px"></div>
<div class="abs vl va" style="left:483.0px;top:387.55px;height:19.85px"></div>
<svg style="left:35.1px;top:390.95px" width="12" height="10.8" viewBox="0 0 12 10.8"><g transform="rotate(-38 6.0 5.4)"><rect x="0.2" y="3.1" width="11.6" height="4.6" rx="2.3" fill="rgba(255,255,255,.7)" stroke="#7c7c7c" stroke-width="1.3"/><path d="M9.6 5.4H2.8" fill="none" stroke="#7c7c7c" stroke-width="1.1" stroke-linecap="round"/></g></svg>
<svg style="left:63.5px;top:389.55px" width="12.4" height="14" viewBox="0 0 12 13.9"><path d="M1.5 0.8h6.0l3.7 3.7v7.9a0.7 0.7 0 0 1-0.7 0.7h-9.0a0.7 0.7 0 0 1-0.7-0.7v-10.9a0.7 0.7 0 0 1 0.7-0.7z" fill="url(#gpage)" stroke="#608dd6" stroke-width="1.05" stroke-linejoin="round"/><path d="M7.5 0.8v3.7h3.7" fill="#eef5fd" stroke="#7ea6e0" stroke-width="0.7" stroke-linejoin="round"/></svg>
<div class="abs row" style="top:407.40px;height:19.85px"></div>
<div class="abs num" style="top:407.4px;height:19.85px"></div>
<div class="abs t" style="left:13.9px;top:409.59999999999997px;font-size:9.4px;font-weight:bold;transform:scaleX(1.0482);">11</div>
<div class="abs t" style="left:149.5px;top:410.4px;font-size:9.6px;transform:scaleX(0.8818);">SR11</div>
<div class="abs t" style="left:323.70000000000005px;top:410.4px;font-size:9.6px;transform:scaleX(0.8542);">GVRTESTDEFAULT</div>
<div class="abs t" style="left:489.3px;top:410.4px;font-size:9.6px;transform:scaleX(0.9595);">test</div>
<div class="abs vl " style="left:51.699999999999996px;top:407.4px;height:19.85px"></div>
<div class="abs vl " style="left:85.0px;top:407.4px;height:19.85px"></div>
<div class="abs vl " style="left:143.20000000000002px;top:407.4px;height:19.85px"></div>
<div class="abs vl " style="left:201.3px;top:407.4px;height:19.85px"></div>
<div class="abs vl " style="left:259.40000000000003px;top:407.4px;height:19.85px"></div>
<div class="abs vl " style="left:317.40000000000003px;top:407.4px;height:19.85px"></div>
<div class="abs vl " style="left:400.40000000000003px;top:407.4px;height:19.85px"></div>
<div class="abs vl " style="left:483.0px;top:407.4px;height:19.85px"></div>
<svg style="left:35.1px;top:410.79999999999995px" width="12" height="10.8" viewBox="0 0 12 10.8"><g transform="rotate(-38 6.0 5.4)"><rect x="0.2" y="3.1" width="11.6" height="4.6" rx="2.3" fill="rgba(255,255,255,.7)" stroke="#7c7c7c" stroke-width="1.3"/><path d="M9.6 5.4H2.8" fill="none" stroke="#7c7c7c" stroke-width="1.1" stroke-linecap="round"/></g></svg>
<svg style="left:63.5px;top:409.4px" width="12.4" height="14" viewBox="0 0 12 13.9"><path d="M1.5 0.8h6.0l3.7 3.7v7.9a0.7 0.7 0 0 1-0.7 0.7h-9.0a0.7 0.7 0 0 1-0.7-0.7v-10.9a0.7 0.7 0 0 1 0.7-0.7z" fill="url(#gpage)" stroke="#608dd6" stroke-width="1.05" stroke-linejoin="round"/><path d="M7.5 0.8v3.7h3.7" fill="#eef5fd" stroke="#7ea6e0" stroke-width="0.7" stroke-linejoin="round"/></svg>
<div class="abs" style="left:649.2px;top:189.3px;width:1px;height:19.4px;background:#b9b9b9"></div><div class="abs" style="left:649.2px;top:208.6px;width:1px;height:218px;background:#f3f3f3"></div>
<div id="lb" class="abs"></div>
</div></body></html>
